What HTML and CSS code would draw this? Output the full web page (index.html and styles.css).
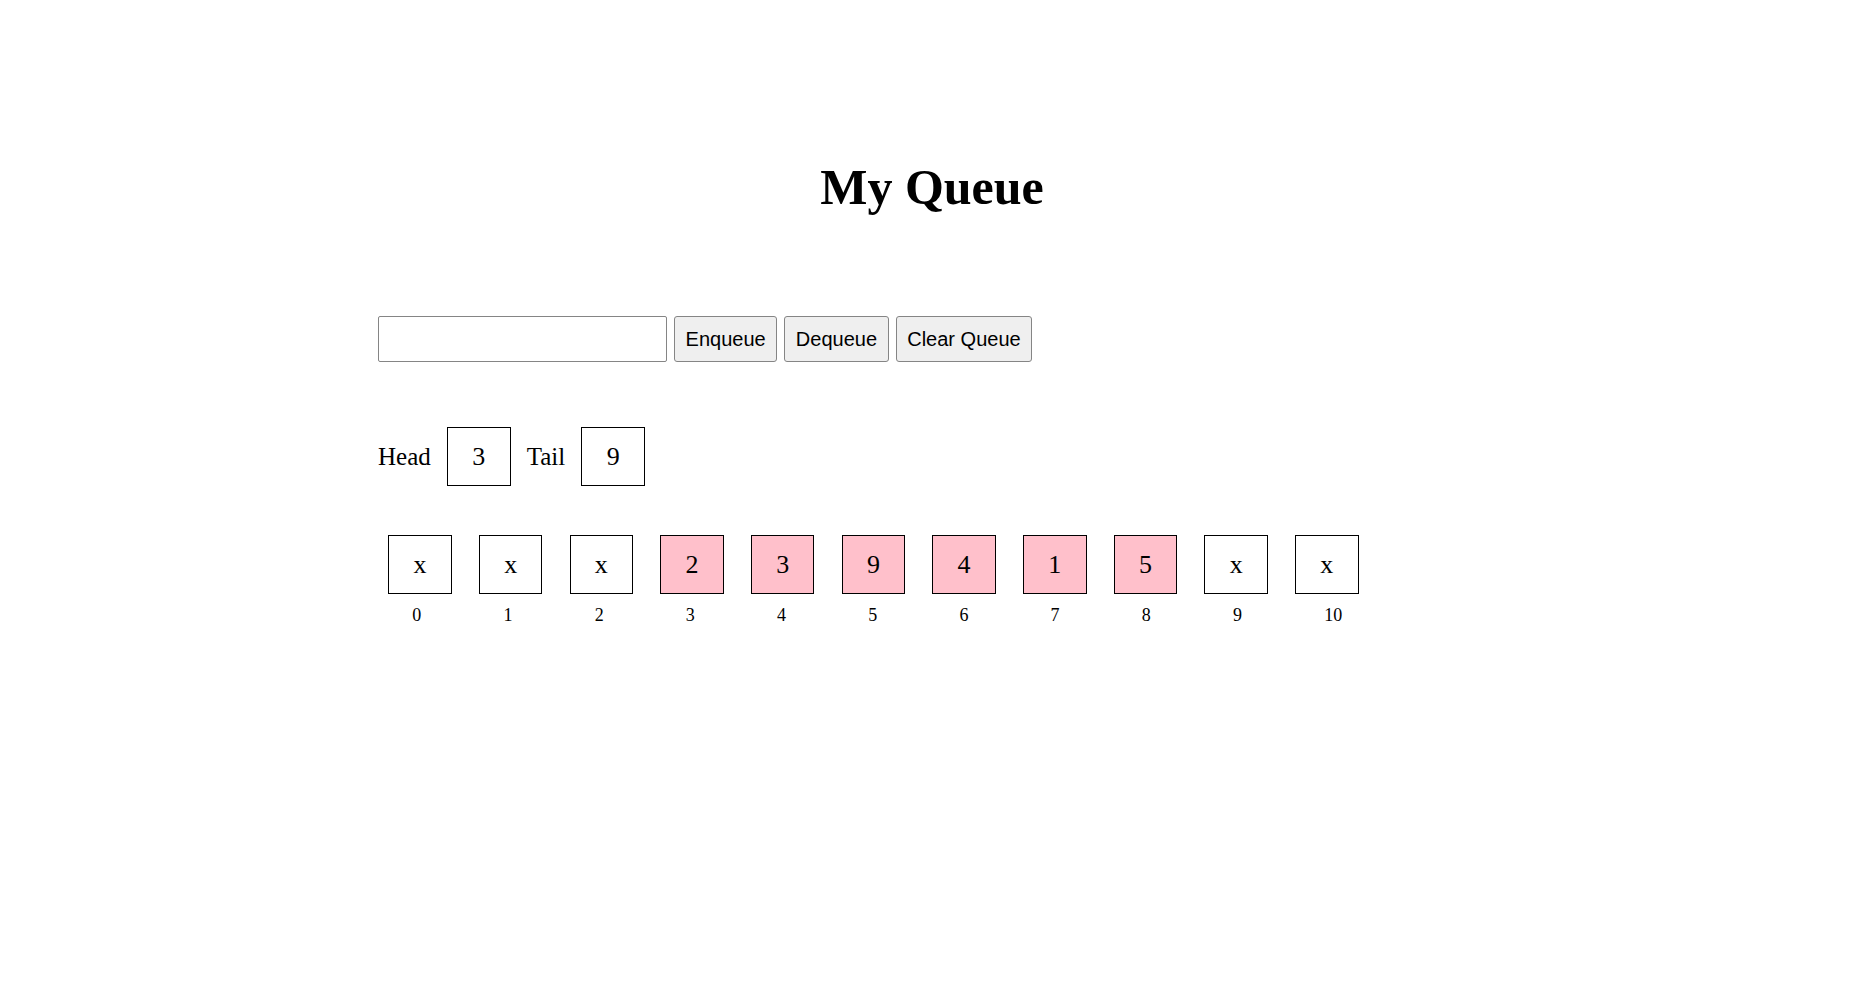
FILE: index.html
```html
<!DOCTYPE html>
<html lang="en">
<head>
<meta charset="utf-8">
<title>My Queue</title>
<link rel="stylesheet" href="styles.css">
</head>
<body>
<div class="page">
  <h1 class="title">My Queue</h1>
  <div class="controls">
    <input class="value-input" type="text">
    <button class="btn btn-enqueue">Enqueue</button>
    <button class="btn btn-dequeue">Dequeue</button>
    <button class="btn btn-clear">Clear Queue</button>
  </div>
  <div class="pointers">
    <span class="pointer-label">Head</span>
    <div class="pointer-box">3</div>
    <span class="pointer-label">Tail</span>
    <div class="pointer-box">9</div>
  </div>
  <div class="cells">
    <div class="cell">x</div>
    <div class="cell">x</div>
    <div class="cell">x</div>
    <div class="cell filled">2</div>
    <div class="cell filled">3</div>
    <div class="cell filled">9</div>
    <div class="cell filled">4</div>
    <div class="cell filled">1</div>
    <div class="cell filled">5</div>
    <div class="cell">x</div>
    <div class="cell">x</div>
  </div>
  <div class="indices">
    <span class="index">0</span>
    <span class="index">1</span>
    <span class="index">2</span>
    <span class="index">3</span>
    <span class="index">4</span>
    <span class="index">5</span>
    <span class="index">6</span>
    <span class="index">7</span>
    <span class="index">8</span>
    <span class="index">9</span>
    <span class="index">10</span>
  </div>
</div>
</body>
</html>
```
FILE: styles.css
```css
html, body {
  margin: 0;
  padding: 0;
  background: #ffffff;
  color: #000000;
  font-family: "Liberation Serif", "Times New Roman", serif;
}

.page {
  width: 1100px;
  margin: 0 auto;
  padding-top: 158px;
}

.title {
  margin: 0;
  padding-left: 8px;
  height: 58px;
  line-height: 58px;
  font-size: 50px;
  font-weight: bold;
  text-align: center;
}

.controls {
  margin-top: 100px;
  display: flex;
  align-items: stretch;
  gap: 7px;
  height: 46px;
}

.value-input {
  box-sizing: border-box;
  width: 289px;
  height: 46px;
  margin: 0;
  padding: 0 8px;
  border: 1px solid #858585;
  border-radius: 2px;
  background: #ffffff;
  font-family: "Liberation Sans", Arial, sans-serif;
  font-size: 20px;
}

.btn {
  box-sizing: border-box;
  height: 46px;
  margin: 0;
  padding: 0 10.6px;
  border: 1px solid #858585;
  border-radius: 3px;
  background: #efefef;
  color: #000000;
  font-family: "Liberation Sans", Arial, sans-serif;
  font-size: 20px;
}

.pointers {
  margin-top: 65px;
  display: flex;
  align-items: center;
  gap: 16px;
}

.pointer-label {
  font-size: 25px;
}

.pointer-box {
  box-sizing: border-box;
  width: 64px;
  height: 59px;
  border: 1px solid #000000;
  display: flex;
  align-items: center;
  justify-content: center;
  font-size: 26px;
}

.cells {
  margin-top: 49.3px;
  padding-left: 10.3px;
  display: flex;
  gap: 27.3px;
}

.cell {
  box-sizing: border-box;
  width: 63.4px;
  height: 58.6px;
  border: 1px solid #000000;
  background: #ffffff;
  display: flex;
  align-items: center;
  justify-content: center;
  font-size: 26px;
}

.cell.filled {
  background: #ffc0cb;
}

.indices {
  margin-top: 11px;
  padding-left: 34.3px;
  display: flex;
  gap: 82.2px;
  font-size: 18px;
}
```
